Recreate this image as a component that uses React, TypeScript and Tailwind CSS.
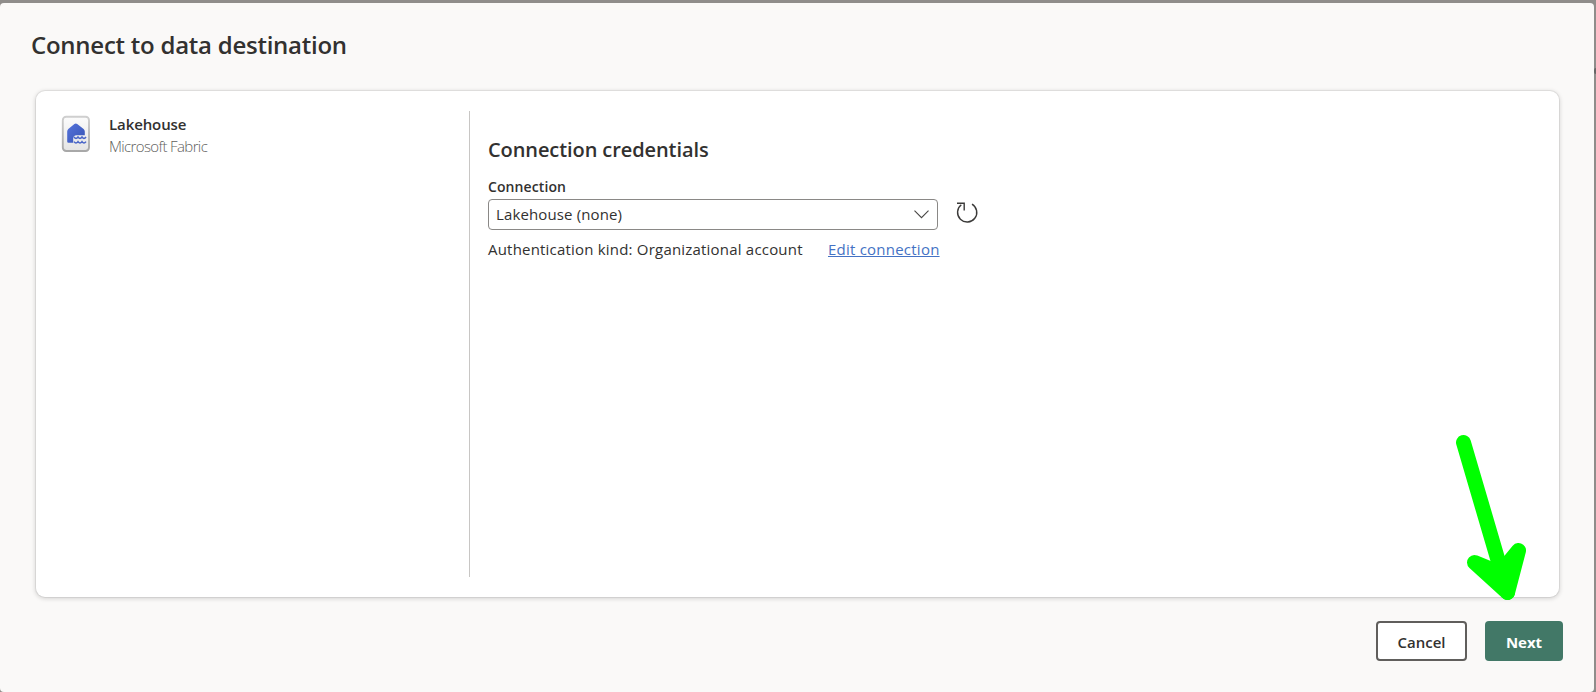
import React from "react";

function LakehouseIcon() {
  return (
    <svg width="30" height="38" viewBox="0 -0.6 30 38" className="shrink-0">
      <defs>
        <linearGradient id="tile" x1="0" y1="0" x2="0" y2="1">
          <stop offset="0" stopColor="#fcfcfc" />
          <stop offset="1" stopColor="#e4e4e4" />
        </linearGradient>
        <linearGradient id="edge" x1="0" y1="0" x2="0" y2="1">
          <stop offset="0" stopColor="#cfcfcf" />
          <stop offset="1" stopColor="#a8a8a8" />
        </linearGradient>
        <linearGradient id="house" x1="0" y1="0" x2="1" y2="1">
          <stop offset="0" stopColor="#5573dc" />
          <stop offset="1" stopColor="#3754b4" />
        </linearGradient>
      </defs>
      <rect x="1.8" y="1.2" width="26.2" height="34.2" rx="3.4" fill="url(#tile)" stroke="url(#edge)" strokeWidth="1.9" />
      <path d="M13.4 8.4Q14.8 7.4 16.2 8.4L22.6 13.4Q23.8 14.4 23.8 16V19.6H15.5Q12.2 19.8 12.2 23V27.2H7.4Q6.2 27.2 6.2 26V16Q6.2 14.4 7.3 13.4Z" fill="url(#house)" />
      <path d="M13 21.4q2 2.8 4 0q2 2.8 4 0q2 2.8 4 0M13 26q2 2.8 4 0q2 2.8 4 0q2 2.8 4 0" fill="none" stroke="#4a66c8" strokeWidth="1.5" />
    </svg>
  );
}

export default function App() {
  return (
    <div className="relative h-[692px] w-[1596px] overflow-hidden bg-[#8f8d8b] pt-[3px] font-['Open_Sans','Noto_Sans',sans-serif] text-[16px] leading-5 text-[#323130]">
      <span className="absolute left-[1594px] top-[68px] h-[6px] w-[2px] rounded-l-full bg-[#666]" />
      <main className="relative flex h-[689px] w-[1594px] flex-col rounded-[4px] bg-[#faf9f8] pl-9 pr-[31px]">
        <h1 className="-ml-[5px] mt-[26px] h-8 whitespace-nowrap text-[24px] font-semibold leading-8 tracking-[-0.25px]">Connect to data destination</h1>
        <section className="mr-[4px] mt-[30px] flex h-[506px] shrink-0 rounded-[9px] bg-white py-5 shadow-[0_0_0_1px_rgba(0,0,0,0.06),0_1px_4px_1px_rgba(0,0,0,0.14)]">
          <div className="flex w-[434px] shrink-0 border-r border-[#c8c6c4] pl-[25px] pt-[4px]">
            <LakehouseIcon />
            <div className="-mt-[2px] ml-[18px] whitespace-nowrap text-[15px] leading-[22px]">
              <div className="font-semibold tracking-[-0.1px]">Lakehouse</div>
              <div className="font-light tracking-[-0.62px] text-[#605e5c]">Microsoft Fabric</div>
            </div>
          </div>
          <div className="pl-[18px] pt-[25px]">
            <h2 className="h-7 whitespace-nowrap text-[20px] font-semibold leading-7 tracking-[-0.09px]">Connection credentials</h2>
            <label className="mt-[13px] block text-[14px] font-semibold leading-5 tracking-[0.1px]">Connection</label>
            <div className="mt-[2px] flex items-center">
              <button className="flex h-[31px] w-[450px] items-center justify-between rounded-[4px] border border-[#8a8886] bg-white pb-[2px] pl-[7px] pr-[8px]">
                <span className="text-[15px] tracking-[0.13px]">Lakehouse (none)</span>
                <svg className="mt-px" width="15" height="9" viewBox="0 0 15 9" fill="none" stroke="#484644" strokeWidth="1.1"><path d="M.5 .7L7.5 7.7L14.5 .7" /></svg>
              </button>
              <svg className="mb-[5px] ml-[17px]" width="24" height="24" viewBox="0 0 24 24" fill="none" stroke="#3b3a39" strokeWidth="1.4">
                <path d="M17 4.1A9.6 9.6 0 1 1 6.3 4.8" /><path d="M2 3.2H9.2V10.6" />
              </svg>
            </div>
            <div className="mt-[9px] flex whitespace-nowrap text-[15px] leading-5">
              <span className="w-[340px] tracking-[0.2px]">Authentication kind: Organizational account</span>
              <a className="tracking-[0.23px] text-[#4472c4] underline">Edit connection</a>
            </div>
          </div>
        </section>
        <footer className="mt-[24px] flex justify-end gap-[18px]">
          <button className="h-10 w-[91px] rounded-[4px] border-2 border-[#605e5c] bg-white pt-[2px] text-[15px] font-semibold">Cancel</button>
          <button className="h-10 w-[78px] rounded-[4px] bg-[#427867] pt-[2px] text-[15px] font-bold text-white">Next</button>
        </footer>
        <svg className="absolute left-[1450px] top-[427px]" width="84" height="174" viewBox="1450 430 84 174" fill="#00ff00" stroke="#00ff00" strokeWidth="15" strokeLinecap="round" strokeLinejoin="round">
          <path d="M1463.5 442.5L1507.5 592.5" fill="none" />
          <path d="M1474.5 562.5L1500 573L1518.5 550.5L1507.5 592.5Z" />
        </svg>
      </main>
    </div>
  );
}
